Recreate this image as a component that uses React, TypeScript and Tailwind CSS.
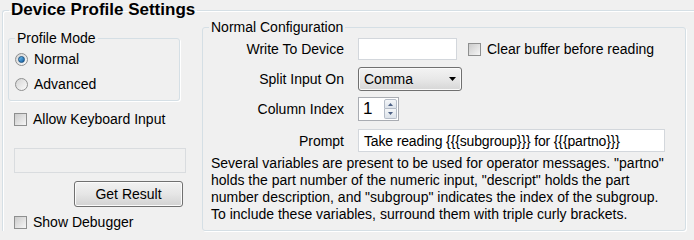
import type { ReactNode } from "react";

function Radio({ label, checked }: { label: string; checked?: boolean }) {
  return (
    <div className="flex h-[18px] items-center">
      <span className="ml-[6px] flex h-[13px] w-[13px] items-center justify-center rounded-full border border-[#8e8f8f] bg-gradient-to-br from-[#d4d4d4] to-[#fbfbfb]">
        {checked && (
          <span className="h-[7px] w-[7px] rounded-full border border-[#1c5180] bg-gradient-to-br from-[#6fc4f5] to-[#0e5a9e]" />
        )}
      </span>
      <span className="ml-[6px]">{label}</span>
    </div>
  );
}

function Check({ label }: { label: string }) {
  return (
    <div className="flex h-[18px] items-center">
      <span className="flex h-[13px] w-[13px] items-center justify-center border border-[#8e8f8f] bg-white">
        <span className="h-[11px] w-[11px] bg-gradient-to-br from-[#cbcbcb] to-[#f6f6f6]" />
      </span>
      <span className="ml-[6px]">{label}</span>
    </div>
  );
}

function Row({ label, children, className }: { label: string; children: ReactNode; className: string }) {
  return (
    <div className={`flex items-center ${className}`}>
      <span className="w-[142px] shrink-0 pr-[1px] text-right">{label}</span>
      <div className="ml-[13px] flex items-center">{children}</div>
    </div>
  );
}

export default function App() {
  return (
    <div
      className="h-[240px] w-[694px] overflow-hidden bg-[#f0f0f0] text-[14px] leading-[16px] text-black"
      style={{ fontFamily: '"Liberation Sans", Arial, sans-serif' }}
    >
      <fieldset className="ml-[2px] rounded-tl-[3px] border-l border-t border-[#d5dfe5] shadow-[inset_1px_1px_0_#ffffff]">
        <legend className="ml-[6px] px-[2px] text-[17px] font-bold leading-[20px]">Device Profile Settings</legend>
        <div className="flex pl-[5px]">
          {/* left column */}
          <div className="flex w-[178px] flex-col">
            <fieldset className="mt-[10px] w-[172px] rounded-[3px] border border-[#d5dfe5] px-0 pb-[7px] pt-[4px] shadow-[1px_1px_0_#ffffff]">
              <legend className="ml-[6px] px-[2px] leading-[16px]">Profile Mode</legend>
              <Radio label="Normal" checked />
              <div className="mt-[7px]">
                <Radio label="Advanced" />
              </div>
            </fieldset>
            <div className="ml-[6px] mt-[9px]">
              <Check label="Allow Keyboard Input" />
            </div>
            <div className="ml-[6px] mt-[20px] h-[25px] w-[172px] border border-[#d9dcdf] bg-[#f0f0f0]" />
            <button className="ml-[66px] mt-[8px] h-[26px] w-[109px] rounded-[3px] border border-[#707070] bg-gradient-to-b from-[#f2f2f2] via-[#e6e6e6] to-[#d2d2d2] text-[14px] shadow-[inset_0_0_0_1px_#fbfbfb]">
              Get Result
            </button>
            <div className="ml-[6px] mt-[6px]">
              <Check label="Show Debugger" />
            </div>
          </div>
          {/* right group */}
          <fieldset className="ml-[16px] mt-[-1px] h-[212px] w-[484px] rounded-[3px] border border-[#d5dfe5] pb-[7px] shadow-[1px_1px_0_#ffffff]">
            <legend className="ml-[6px] px-[2px] leading-[16px]">Normal Configuration</legend>
            <Row label="Write To Device" className="mt-[3px]">
              <div className="h-[22px] w-[99px] border border-[#d3d7dc] bg-white" />
              <div className="ml-[11px]">
                <Check label="Clear buffer before reading" />
              </div>
            </Row>
            <Row label="Split Input On" className="mt-[7px]">
              <div className="flex h-[24px] w-[104px] items-center justify-between rounded-[3px] border border-[#707070] bg-gradient-to-b from-[#f3f3f3] via-[#e8e8e8] to-[#d6d6d6] pl-[5px] pr-[5px] shadow-[inset_0_0_0_1px_#fafafa]">
                <span>Comma</span>
                <svg width="7" height="4" viewBox="0 0 7 4">
                  <path d="M0 0h7L3.5 4z" fill="#000" />
                </svg>
              </div>
            </Row>
            <Row label="Column Index" className="mt-[6px]">
              <div className="flex h-[24px] w-[41px] items-center border border-[#a9acb2] bg-white">
                <span className="ml-[4px] w-[20px] text-[17px] leading-[20px]">1</span>
                <div className="ml-[1px] flex flex-col">
                  <span className="flex h-[10px] w-[13px] items-center justify-center rounded-t-[2px] border border-[#b5bcc7] bg-gradient-to-b from-[#f4f6f8] to-[#dde3ea]">
                    <svg width="5" height="3" viewBox="0 0 5 3"><path d="M0 3h5L2.5 0z" fill="#4d6185" /></svg>
                  </span>
                  <span className="flex h-[10px] w-[13px] items-center justify-center rounded-b-[2px] border border-t-0 border-[#b5bcc7] bg-gradient-to-b from-[#f4f6f8] to-[#dde3ea]">
                    <svg width="5" height="3" viewBox="0 0 5 3"><path d="M0 0h5L2.5 3z" fill="#4d6185" /></svg>
                  </span>
                </div>
              </div>
            </Row>
            <Row label="Prompt" className="mt-[8px]">
              <div className="flex h-[23px] w-[307px] items-center border border-[#d3d7dc] bg-white pl-[5px]">
                <span className="tracking-[-0.15px]">Take reading {"{{{subgroup}}}"} for {"{{{partno}}}"}</span>
              </div>
            </Row>
            <p className="ml-[8px] mt-[3px] whitespace-nowrap leading-[17px]">
              Several variables are present to be used for operator messages. "partno"
              <br />
              holds the part number of the numeric input, "descript" holds the part
              <br />
              number description, and "subgroup" indicates the index of the subgroup.
              <br />
              To include these variables, surround them with triple curly brackets.
            </p>
          </fieldset>
        </div>
      </fieldset>
    </div>
  );
}
